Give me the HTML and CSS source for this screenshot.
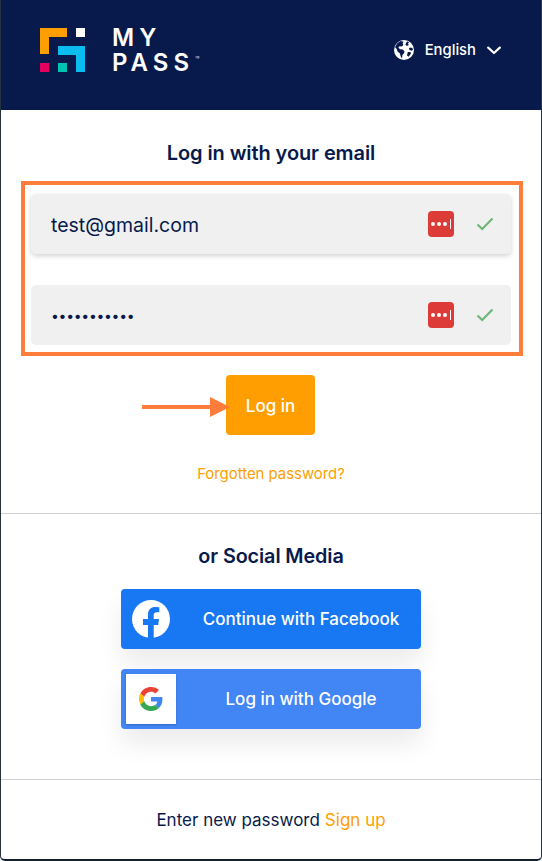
FILE: index.html
```html
<!DOCTYPE html>
<html lang="en">
<head>
<meta charset="utf-8">
<title>MyPass login</title>
<link rel="stylesheet" href="styles.css">
</head>
<body>
<div class="card">
  <header class="header">
    <div class="brand">
      <svg class="logo" width="45" height="44" viewBox="0 0 45 44">
        <path fill="#ff9e00" d="M0 0H27V9H9V26H0Z"/>
        <rect x="36" y="0" width="9" height="9" fill="#fff"/>
        <path fill="#0bbcef" d="M18 18H45V44H36V27H18Z"/>
        <rect x="0" y="35" width="9" height="9" fill="#e5005f"/>
        <rect x="18" y="35" width="9" height="9" fill="#00c4b3"/>
      </svg>
      <div class="wordmark">
        <span>MY</span>
        <span class="wordmark-pass">PASS<sup class="tm">™</sup></span>
      </div>
    </div>
    <div class="lang">
      <svg class="globe" width="20" height="20" viewBox="0 0 20 20">
        <circle cx="10" cy="10" r="10" fill="#fff"/>
        <path fill="#081a4b" d="M6.500 1 9.500 1.800 8.600 3.400 9.400 5 7.800 6.600 5.600 6.200 4.400 7.600 6 9.200 8.800 9.400 10.600 11.400 9.800 13.400 8.400 15 8 18.500 6.600 16.200 6 13.400 3.600 11.600 2.400 8.600 1 7.200 3 3.400ZM13 1.200 15 2.600 13.800 4 15 5 12.800 6 11.400 4.400ZM15 8 17.200 7.400 19.200 9 18 10.800 15.400 10ZM13.800 12 16.400 12 17 13.600 14.600 16.800 13 15.600Z"/>
      </svg>
      <span class="lang-name">English</span>
      <svg class="chev" width="14" height="9" viewBox="0 0 14 9"><path d="M1.200 1.600 7 7 12.800 1.600" fill="none" stroke="#fff" stroke-width="2.200" stroke-linecap="round" stroke-linejoin="round"/></svg>
    </div>
  </header>

  <main class="login">
    <h2 class="title">Log in with your email</h2>
    <div class="highlight">
      <div class="field field-focus">
        <span class="field-text">test@gmail.com</span>
        <span class="lp"><i></i><i></i><i></i><b></b></span>
        <svg class="check" width="18" height="14" viewBox="0 0 18 14"><path d="M1.500 7.500 6.200 12 16.500 1.500" fill="none" stroke="#6fb576" stroke-width="2.200"/></svg>
      </div>
      <div class="field">
        <span class="field-dots">•••••••••••</span>
        <span class="lp"><i></i><i></i><i></i><b></b></span>
        <svg class="check" width="18" height="14" viewBox="0 0 18 14"><path d="M1.500 7.500 6.200 12 16.500 1.500" fill="none" stroke="#6fb576" stroke-width="2.200"/></svg>
      </div>
    </div>
    <div class="submit-row">
      <svg class="arrow" width="90" height="20" viewBox="0 0 90 20"><path fill="#ff7c3a" d="M0 8H68V0L88 10 68 20V12H0Z"/></svg>
      <button class="btn-login" type="button">Log in</button>
    </div>
    <a class="forgot" href="#">Forgotten password?</a>
  </main>

  <section class="social">
    <h2 class="title title-social">or Social Media</h2>
    <button class="btn-social btn-fb" type="button">
      <span class="fb-slot">
        <svg width="38" height="38" viewBox="0 0 38 38">
          <circle cx="19" cy="19" r="19" fill="#fff"/>
          <path fill="#1877f2" d="M16 38V25H11V19H16V14.500C16 9.500 19 7 23.300 7 25.400 7 27.300 7.300 27.300 7.300V12.300H24.800C22.300 12.300 21.700 13.800 21.700 15.300V19H27L26.200 25H21.700V38Z"/>
        </svg>
      </span>
      <span class="btn-label">Continue with Facebook</span>
    </button>
    <button class="btn-social btn-google" type="button">
      <span class="g-slot">
        <svg width="24" height="24" viewBox="0 0 48 48">
          <path fill="#ea4335" d="M24 9.500c3.500 0 6.700 1.300 9.100 3.500l6.800-6.800C35.800 2.400 30.300 0 24 0 14.600 0 6.500 5.400 2.600 13.200l7.900 6.100C12.400 13.700 17.700 9.500 24 9.500z"/>
          <path fill="#4285f4" d="M46.900 24.500c0-1.600-.2-3.100-.4-4.500H24v9h12.900c-.6 3-2.200 5.500-4.700 7.200l7.700 6c4.500-4.200 7-10.300 7-17.700z"/>
          <path fill="#fbbc05" d="M10.500 28.700c-.5-1.400-.8-3-.8-4.700s.3-3.300.8-4.700l-7.900-6.100C.9 16.500 0 20.100 0 24s.9 7.500 2.600 10.800z"/>
          <path fill="#34a853" d="M24 48c6.500 0 11.900-2.100 15.900-5.800l-7.700-6c-2.200 1.400-4.900 2.300-8.200 2.300-6.300 0-11.600-4.200-13.500-9.800l-7.900 6.100C6.500 42.600 14.600 48 24 48z"/>
        </svg>
      </span>
      <span class="btn-label">Log in with Google</span>
    </button>
  </section>

  <footer class="footer">Enter new password <a class="signup" href="#">Sign up</a></footer>
</div>
</body>
</html>
```

FILE: styles.css
```css
* { box-sizing: border-box; }
html, body { margin: 0; height: 100%; background: #fff; }
body { font-family: Inter, "Noto Sans", sans-serif; color: #081a4b; }
.card {
  height: 861px;
  border: 1px solid #25333f;
  border-top: 0;
  border-bottom: 2px solid #15202e;
  border-radius: 0 0 5px 5px;
  display: flex;
  flex-direction: column;
}
.header {
  height: 110px;
  flex: none;
  background: #081a4b;
  display: flex;
  align-items: center;
  justify-content: space-between;
  padding: 0 40px 10px 39px;
}
.brand { display: flex; align-items: center; gap: 27px; }
.logo { display: block; }
.wordmark {
  display: flex;
  flex-direction: column;
  color: #fff;
  font-weight: 600;
  font-size: 24px;
  line-height: 25px;
  letter-spacing: 5px;
}
.tm { font-size: 7px; line-height: 0; letter-spacing: 0; vertical-align: 9px; color: #c5c8d2; margin-left: 1px; }
.lang { display: flex; align-items: center; color: #fff; }
.globe { display: block; margin-right: 11px; margin-left: 1px; }
.lang-name { margin-right: 11px; font-weight: 500; font-size: 14.800px; }
.chev { display: block; }
.login { height: 403px; flex: none; padding-top: 30px; display: flex; flex-direction: column; align-items: center; }
.title { margin: 0; font-size: 20px; font-weight: 600; line-height: 26px; text-align: center; color: #081a4b; letter-spacing: -.1px; }
.title-social { font-size: 19.800px; }
.highlight {
  width: 502px;
  height: 175px;
  flex: none;
  margin-top: 15px;
  margin-left: 2px;
  border: 4px solid #ff7c3a;
  padding: 9px 6px 0;
  display: flex;
  flex-direction: column;
  gap: 31px;
}
.field {
  height: 60px;
  width: 480px;
  flex: none;
  background: #f0f0f0;
  border-radius: 5px;
  display: flex;
  align-items: center;
  padding: 0 17px 0 21px;
}
.field-focus { box-shadow: 0 2px 5px rgba(0,0,0,.18); }
.field-text { font-size: 19.500px; flex: 1; color: #081a4b; padding-top: 2px; margin-left: -1px; }
.field-dots { font-size: 14px; letter-spacing: -.3px; flex: 1; color: #081a4b; margin-left: -1px; }
.lp {
  width: 26px;
  height: 26px;
  background: #dd3b37;
  border-radius: 4px;
  display: flex;
  align-items: center;
  padding-left: 3px;
  gap: 2px;
  margin-right: 22px;
}
.lp i { width: 4px; height: 4px; border-radius: 50%; background: #fff; }
.lp b { width: 1px; height: 10px; background: #fff; margin-left: 1px; }
.check { display: block; }
.submit-row { position: relative; margin-top: 19px; margin-right: 1px; }
.arrow { position: absolute; left: -84px; top: 22px; }
.btn-login {
  display: block;
  width: 89px;
  height: 60px;
  border: 0;
  border-radius: 4px;
  background: #ff9e00;
  color: #fff;
  font-family: Inter, sans-serif;
  font-size: 17px;
  font-weight: 500;
  padding: 1px 0 0;
}
.forgot { margin-top: 31px; font-size: 14.900px; color: #ff9e00; text-decoration: none; line-height: 17px; }
.social {
  height: 267px;
  flex: none;
  border-top: 1px solid #cfcfcf;
  border-bottom: 1px solid #cfcfcf;
  padding-top: 29px;
  display: flex;
  flex-direction: column;
  align-items: center;
}
.btn-social {
  width: 300px;
  height: 60px;
  flex: none;
  border: 0;
  border-radius: 4px;
  color: #fff;
  font-family: Inter, sans-serif;
  font-size: 17px;
  font-weight: 500;
  display: flex;
  align-items: center;
  padding: 0;
  box-shadow: 0 15px 25px rgba(0,0,0,.08);
}
.btn-fb { background: #1877f2; margin-top: 20px; }
.btn-google { background: #4285f4; margin-top: 20px; }
.fb-slot { width: 60px; display: flex; justify-content: center; }
.g-slot { width: 50px; height: 50px; margin-left: 5px; background: #fff; display: flex; align-items: center; justify-content: center; box-shadow: 0 1px 2px rgba(0,0,0,.2); }
.btn-label { flex: 1; text-align: center; }
.btn-google .btn-label { padding-left: 5px; }
.footer { flex: 1; display: flex; align-items: center; justify-content: center; gap: 5px; font-size: 17px; color: #081a4b; }
.signup { color: #ff9e00; text-decoration: none; }
```
